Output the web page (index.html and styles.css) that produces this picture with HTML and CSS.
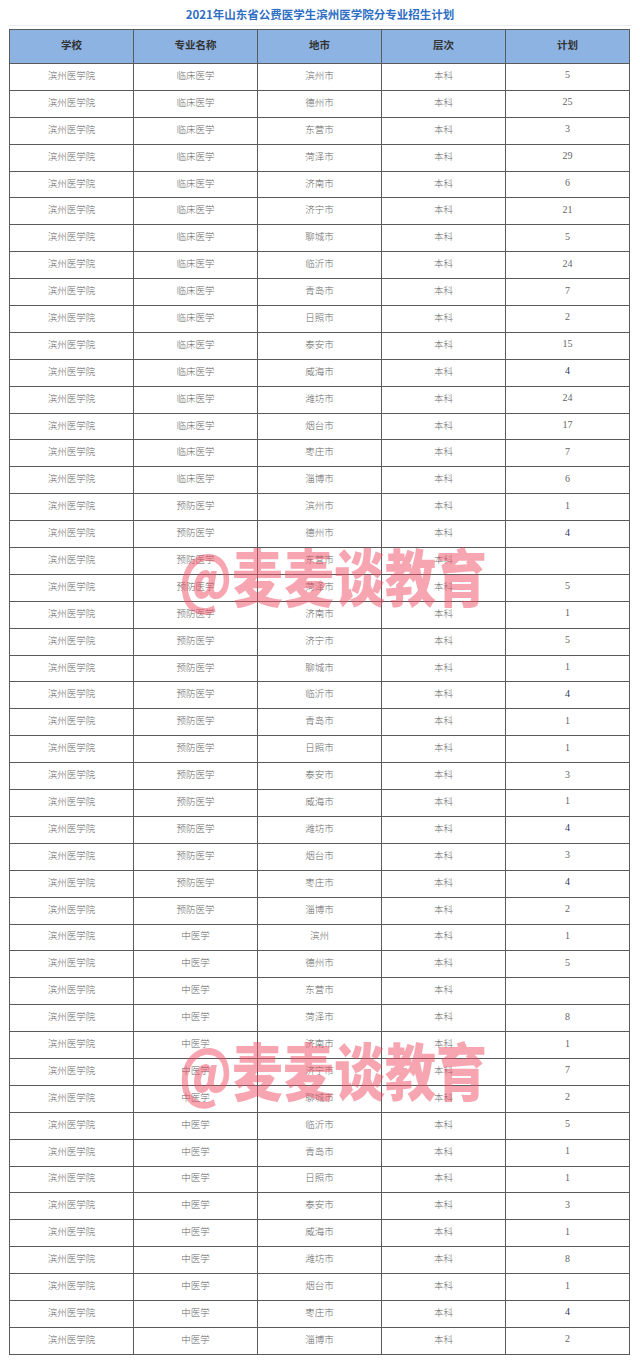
FILE: index.html
```html
<!DOCTYPE html>
<html lang="zh">
<head>
<meta charset="utf-8">
<title>2021年山东省公费医学生滨州医学院分专业招生计划</title>
<link rel="stylesheet" href="styles.css">
</head>
<body>
<div class="page">
<h1 class="title">2021年山东省公费医学生滨州医学院分专业招生计划</h1>
<table class="plan">
<thead>
<tr><th>学校</th><th>专业名称</th><th>地市</th><th>层次</th><th>计划</th></tr>
</thead>
<tbody>
<tr><td>滨州医学院</td><td>临床医学</td><td>滨州市</td><td>本科</td><td class="num">5</td></tr>
<tr><td>滨州医学院</td><td>临床医学</td><td>德州市</td><td>本科</td><td class="num">25</td></tr>
<tr><td>滨州医学院</td><td>临床医学</td><td>东营市</td><td>本科</td><td class="num">3</td></tr>
<tr><td>滨州医学院</td><td>临床医学</td><td>菏泽市</td><td>本科</td><td class="num">29</td></tr>
<tr><td>滨州医学院</td><td>临床医学</td><td>济南市</td><td>本科</td><td class="num">6</td></tr>
<tr><td>滨州医学院</td><td>临床医学</td><td>济宁市</td><td>本科</td><td class="num">21</td></tr>
<tr><td>滨州医学院</td><td>临床医学</td><td>聊城市</td><td>本科</td><td class="num">5</td></tr>
<tr><td>滨州医学院</td><td>临床医学</td><td>临沂市</td><td>本科</td><td class="num">24</td></tr>
<tr><td>滨州医学院</td><td>临床医学</td><td>青岛市</td><td>本科</td><td class="num">7</td></tr>
<tr><td>滨州医学院</td><td>临床医学</td><td>日照市</td><td>本科</td><td class="num">2</td></tr>
<tr><td>滨州医学院</td><td>临床医学</td><td>泰安市</td><td>本科</td><td class="num">15</td></tr>
<tr><td>滨州医学院</td><td>临床医学</td><td>威海市</td><td>本科</td><td class="num dark">4</td></tr>
<tr><td>滨州医学院</td><td>临床医学</td><td>潍坊市</td><td>本科</td><td class="num">24</td></tr>
<tr><td>滨州医学院</td><td>临床医学</td><td>烟台市</td><td>本科</td><td class="num">17</td></tr>
<tr><td>滨州医学院</td><td>临床医学</td><td>枣庄市</td><td>本科</td><td class="num">7</td></tr>
<tr><td>滨州医学院</td><td>临床医学</td><td>淄博市</td><td>本科</td><td class="num">6</td></tr>
<tr><td>滨州医学院</td><td>预防医学</td><td>滨州市</td><td>本科</td><td class="num">1</td></tr>
<tr><td>滨州医学院</td><td>预防医学</td><td>德州市</td><td>本科</td><td class="num dark">4</td></tr>
<tr><td>滨州医学院</td><td>预防医学</td><td>东营市</td><td>本科</td><td class="num"></td></tr>
<tr><td>滨州医学院</td><td>预防医学</td><td>菏泽市</td><td>本科</td><td class="num">5</td></tr>
<tr><td>滨州医学院</td><td>预防医学</td><td>济南市</td><td>本科</td><td class="num">1</td></tr>
<tr><td>滨州医学院</td><td>预防医学</td><td>济宁市</td><td>本科</td><td class="num">5</td></tr>
<tr><td>滨州医学院</td><td>预防医学</td><td>聊城市</td><td>本科</td><td class="num">1</td></tr>
<tr><td>滨州医学院</td><td>预防医学</td><td>临沂市</td><td>本科</td><td class="num dark">4</td></tr>
<tr><td>滨州医学院</td><td>预防医学</td><td>青岛市</td><td>本科</td><td class="num">1</td></tr>
<tr><td>滨州医学院</td><td>预防医学</td><td>日照市</td><td>本科</td><td class="num">1</td></tr>
<tr><td>滨州医学院</td><td>预防医学</td><td>泰安市</td><td>本科</td><td class="num">3</td></tr>
<tr><td>滨州医学院</td><td>预防医学</td><td>威海市</td><td>本科</td><td class="num">1</td></tr>
<tr><td>滨州医学院</td><td>预防医学</td><td>潍坊市</td><td>本科</td><td class="num dark">4</td></tr>
<tr><td>滨州医学院</td><td>预防医学</td><td>烟台市</td><td>本科</td><td class="num">3</td></tr>
<tr><td>滨州医学院</td><td>预防医学</td><td>枣庄市</td><td>本科</td><td class="num dark">4</td></tr>
<tr><td>滨州医学院</td><td>预防医学</td><td>淄博市</td><td>本科</td><td class="num">2</td></tr>
<tr><td>滨州医学院</td><td>中医学</td><td>滨州</td><td>本科</td><td class="num">1</td></tr>
<tr><td>滨州医学院</td><td>中医学</td><td>德州市</td><td>本科</td><td class="num">5</td></tr>
<tr><td>滨州医学院</td><td>中医学</td><td>东营市</td><td>本科</td><td class="num"></td></tr>
<tr><td>滨州医学院</td><td>中医学</td><td>菏泽市</td><td>本科</td><td class="num">8</td></tr>
<tr><td>滨州医学院</td><td>中医学</td><td>济南市</td><td>本科</td><td class="num">1</td></tr>
<tr><td>滨州医学院</td><td>中医学</td><td>济宁市</td><td>本科</td><td class="num">7</td></tr>
<tr><td>滨州医学院</td><td>中医学</td><td>聊城市</td><td>本科</td><td class="num">2</td></tr>
<tr><td>滨州医学院</td><td>中医学</td><td>临沂市</td><td>本科</td><td class="num">5</td></tr>
<tr><td>滨州医学院</td><td>中医学</td><td>青岛市</td><td>本科</td><td class="num">1</td></tr>
<tr><td>滨州医学院</td><td>中医学</td><td>日照市</td><td>本科</td><td class="num">1</td></tr>
<tr><td>滨州医学院</td><td>中医学</td><td>泰安市</td><td>本科</td><td class="num">3</td></tr>
<tr><td>滨州医学院</td><td>中医学</td><td>威海市</td><td>本科</td><td class="num">1</td></tr>
<tr><td>滨州医学院</td><td>中医学</td><td>潍坊市</td><td>本科</td><td class="num">8</td></tr>
<tr><td>滨州医学院</td><td>中医学</td><td>烟台市</td><td>本科</td><td class="num">1</td></tr>
<tr><td>滨州医学院</td><td>中医学</td><td>枣庄市</td><td>本科</td><td class="num dark">4</td></tr>
<tr><td>滨州医学院</td><td>中医学</td><td>淄博市</td><td>本科</td><td class="num">2</td></tr>
</tbody>
</table>
<div class="watermark wm-top">@麦麦谈教育</div>
<div class="watermark wm-bottom">@麦麦谈教育</div>
</div>
</body>
</html>
```

FILE: styles.css
```css
html, body {
  margin: 0;
  padding: 0;
  background: #ffffff;
}

.page {
  position: relative;
  width: 640px;
  min-height: 1368px;
  padding-top: 5px;
  box-sizing: border-box;
}

.title {
  margin: 0 8px;
  padding: 0 0 2px;
  height: 18px;
  line-height: 18px;
  text-align: center;
  font-family: "Noto Sans CJK SC", "Noto Sans", sans-serif;
  font-size: 11.5px;
  font-weight: 700;
  color: #2f6fc4;
  border-bottom: 1px solid #eeeeee;
}

.plan {
  margin: 3px 0 0 9px;
  width: 621px;
  border-collapse: collapse;
  table-layout: fixed;
  font-family: "Liberation Serif", "Noto Sans CJK SC", serif;
}

.plan th,
.plan td {
  border: 1px solid #5a5a5a;
  text-align: center;
  padding: 0 0 4px;
  box-sizing: border-box;
}

.plan th {
  height: 34px;
  background: #8db3e2;
  font-size: 10.5px;
  font-weight: 700;
  color: #333333;
}

.plan td {
  height: 26.9px;
  font-size: 9.5px;
  font-weight: 300;
  color: #666666;
}

.plan td.num {
  font-size: 10px;
  font-weight: 400;
}

.plan td.dark {
  color: #2b3560;
}

.watermark {
  position: absolute;
  left: 179px;
  font-family: "Noto Sans CJK SC", "Noto Sans", sans-serif;
  font-size: 51px;
  font-weight: 900;
  line-height: 60px;
  color: rgba(240, 78, 100, 0.5);
  white-space: nowrap;
  transform: scaleY(1.22);
  transform-origin: 50% 50%;
  pointer-events: none;
}

.wm-top {
  top: 545px;
}

.wm-bottom {
  top: 1039px;
}
```
